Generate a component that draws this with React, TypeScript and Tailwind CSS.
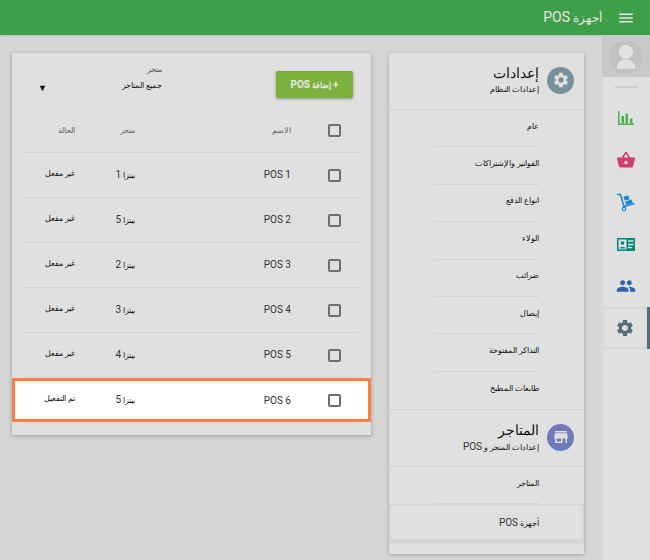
import React from "react";
import { MdMenu, MdSettings, MdStore, MdShoppingBasket, MdPeople } from "react-icons/md";

const settingsItems = [
  "عام",
  "الفواتير والإشتراكات",
  "انواع الدفع",
  "الولاء",
  "ضرائب",
  "إيصال",
  "التذاكر المفتوحة",
  "طابعات المطبخ",
];

const rows = [
  { name: "POS 1", store: "1", status: "غير مفعل" },
  { name: "POS 2", store: "5", status: "غير مفعل" },
  { name: "POS 3", store: "2", status: "غير مفعل" },
  { name: "POS 4", store: "3", status: "غير مفعل" },
  { name: "POS 5", store: "4", status: "غير مفعل" },
];

const Checkbox = () => (
  <div className="w-[13px] h-[13px] rounded-[2px] border-2 border-[#6e6e6e]" />
);

const BarsIcon = () => (
  <svg width="16" height="14" viewBox="0 0 16 14" fill="#4caf50">
    <path d="M0 0H1.5V12.5H16V14H0Z" />
    <path d="M3.5 5H6V12.5H3.5ZM7.5 2.5H10V12.5H7.5ZM12 7.5H14.5V12.5H12Z" />
  </svg>
);

const TrolleyIcon = () => (
  <svg width="20" height="20" viewBox="0 0 20 20">
    <path d="M1 2.5L4.5 2.5L8 14.5L18.5 11.5" fill="none" stroke="#1e88d2" strokeWidth="1.5" />
    <path d="M7.5 4.5L12.5 3.5L13.5 7.5L8.5 8.5Z" fill="#1e88d2" />
    <path d="M9 9.5L15.5 7.5L17 11L10 13Z" fill="#1e88d2" />
    <circle cx="8" cy="17" r="1.8" fill="none" stroke="#1e88d2" strokeWidth="1.2" />
  </svg>
);

const CardIcon = () => (
  <svg width="18" height="13" viewBox="0 0 18 13">
    <rect width="18" height="13" rx="0.5" fill="#00897b" />
    <rect x="1.5" y="1.5" width="8" height="10" fill="#e0e0e0" />
    <circle cx="5.5" cy="5" r="1.8" fill="#00897b" />
    <path d="M2.5 10.5C2.5 8.5 8.5 8.5 8.5 10.5Z" fill="#00897b" />
    <path d="M11 3H16.5M11 6.5H16.5M11 9.5H15" stroke="#e0e0e0" strokeWidth="1.3" />
  </svg>
);

const AvatarIcon = () => (
  <svg width="20" height="24" viewBox="0 0 20 24" fill="#e2e2e2">
    <circle cx="10" cy="7" r="7" />
    <path d="M1 24C0 19 4 14.5 10 14.5C16 14.5 20 19 19 24Z" />
  </svg>
);

const SideHeading = ({ title, subtitle, icon, color }: { title: string; subtitle: React.ReactNode; icon: React.ReactNode; color: string }) => (
  <div className="flex items-center gap-2 pr-[10px] h-[56px] pb-[2px]">
    <div className={`w-[27px] h-[27px] rounded-full flex items-center justify-center text-[#e0e0e0] ${color}`}>
      {icon}
    </div>
    <div>
      <div className="text-[14px] leading-[20px] text-[#111]">{title}</div>
      <div className="text-[8px] leading-[14px] text-[#111]">{subtitle}</div>
    </div>
  </div>
);

export default function App() {
  return (
    <div dir="rtl" className="w-[650px] h-[560px] overflow-hidden bg-[#d6d6d6] font-['Roboto',sans-serif] flex flex-col">
      <header className="h-[35px] shrink-0 bg-[#3f9e48] shadow-sm flex items-center text-[#e6e6e6]">
        <div className="w-[48px] flex justify-center">
          <MdMenu size={18} />
        </div>
        <span className="text-[12px]">أجهزة <span className="text-[14px]">POS</span></span>
      </header>

      <div className="flex flex-1 min-h-0">
        {/* icon rail */}
        <nav className="w-[48px] shrink-0 bg-[#e0e0e0] flex flex-col items-center">
          <div className="w-full h-[42px] bg-[#c9c9c9] flex items-center justify-center overflow-hidden">
            <div className="w-[34px] h-[34px] shrink-0 rounded-full bg-[#c2c2c2] flex items-center justify-center mt-[2px]">
              <AvatarIcon />
            </div>
          </div>
          <div className="w-[23px] h-[2px] bg-[#cfcfcf] mt-[9px] mb-[9px]" />
          <div className="w-full h-[42px] flex items-center justify-center"><BarsIcon /></div>
          <div className="w-full h-[42px] flex items-center justify-center"><MdShoppingBasket size={20} className="text-[#d23f6e]" /></div>
          <div className="w-full h-[42px] flex items-center justify-center"><TrolleyIcon /></div>
          <div className="w-full h-[42px] flex items-center justify-center"><CardIcon /></div>
          <div className="w-full h-[42px] flex items-center justify-center"><MdPeople size={20} className="text-[#2f62ad]" /></div>
          <div className="w-[47px] self-start h-[42px] flex items-center justify-center border-r-[3px] border-[#546e7a] shadow-[inset_0_0_3px_rgba(0,0,0,0.12)]">
            <MdSettings size={20} className="text-[#546e7a]" />
          </div>
        </nav>

        {/* settings column */}
        <aside className="w-[195px] shrink-0 mr-[18px] mt-[18px] h-[501px] bg-[#e0e0e0] shadow-[0_1px_4px_rgba(0,0,0,0.25)]">
          <SideHeading title="إعدادات" subtitle="إعدادات النظام" color="bg-[#78909c]" icon={<MdSettings size={18} />} />
          <div className="border-t border-[#d2d2d2]">
            {settingsItems.map((label, i) => (
              <div key={label} className={`h-[37.4px] mr-[45px] w-[105px] pb-[3px] flex items-center text-[8px] text-[#111] ${i < settingsItems.length - 1 ? "border-b border-[#d2d2d2]" : ""}`}>
                {label}
              </div>
            ))}
          </div>
          <div className="border-t border-[#d2d2d2]">
            <SideHeading title="المتاجر" subtitle={<>إعدادات المتجر و <span className="text-[10px] text-[#333]">POS</span></>} color="bg-[#6f7ab8]" icon={<MdStore size={18} />} />
          </div>
          <div className="border-t border-[#d2d2d2]">
            <div className="h-[37px] mr-[45px] w-[105px] pb-[3px] flex items-center text-[8px] text-[#111] border-b border-[#d2d2d2]">المتاجر</div>
            <div className="h-[37px] pr-[45px] flex items-center text-[8px] text-[#111] shadow-[inset_0_0_3px_rgba(0,0,0,0.15)]">
              <span>أجهزة <span className="text-[10px] text-[#333]">POS</span></span>
            </div>
          </div>
          <div className="h-[3px] bg-[#d6d6d6]" />
        </aside>

        {/* table card */}
        <main className="w-[359px] mr-[18px] mt-[18px] h-[382px] bg-[#e0e0e0] shadow-[0_1px_4px_rgba(0,0,0,0.3)] pt-[10px] flex flex-col">
          <div className="flex items-start pr-[18px] pl-[26px] h-[46px]">
            <button className="mt-[8px] w-[77px] h-[27px] rounded-[2px] bg-[#7cb13e] text-[#e8e8e8] text-[8px] font-bold shadow-[0_1px_3px_rgba(0,0,0,0.35)]">
              <span className="text-[10px]">+</span> إضافة <span className="text-[10px]">POS</span>
            </button>
            <div className="mr-[114px] text-[8px] text-[#111]">
              <div className="text-[7.5px] text-[#555] leading-[12px] mt-[1px]">متجر</div>
              <div className="leading-[18px] mt-[1px]">جميع المتاجر</div>
            </div>
            <span className="mr-auto mt-[19px] text-[9px] text-black leading-[12px]">▼</span>
          </div>

          <div className="mx-[12px]">
            <div className="h-[44px] flex items-center border-b border-[#d2d2d2] text-[8px] text-[#666]">
              <div className="w-[39px] pr-[18px]"><Checkbox /></div>
              <div className="w-[185px] pr-[29px]">الاسم</div>
              <div className="w-[60px]">متجر</div>
              <div>الحالة</div>
            </div>
            {rows.map((row) => (
              <div key={row.name} className="h-[45px] flex items-center border-b border-[#d2d2d2] text-[8px] text-[#111] pb-[2px]">
                <div className="w-[39px] pr-[18px] pt-[2px]"><Checkbox /></div>
                <div className="w-[185px] pr-[29px] text-[10px] text-[#333] pt-[1px]">{row.name}</div>
                <div className="w-[60px]">بيتزا <span className="text-[10px] text-[#333]">{row.store}</span></div>
                <div>{row.status}</div>
              </div>
            ))}
          </div>
          {/* highlighted row */}
          <div className="h-[44px] shrink-0 border-[3px] border-[#ff7f3f] bg-white flex items-center text-[8px] text-[#111] pr-[9px]">
            <div className="w-[39px] pr-[18px]"><Checkbox /></div>
            <div className="w-[185px] pr-[29px] text-[10px] text-[#333]">POS 6</div>
            <div className="w-[60px] pb-[2px]">بيتزا <span className="text-[10px] text-[#333]">5</span></div>
            <div className="pb-[2px]">تم التفعيل</div>
          </div>
          <div className="mx-[12px] border-t border-[#d2d2d2]" />
        </main>
      </div>
    </div>
  );
}
